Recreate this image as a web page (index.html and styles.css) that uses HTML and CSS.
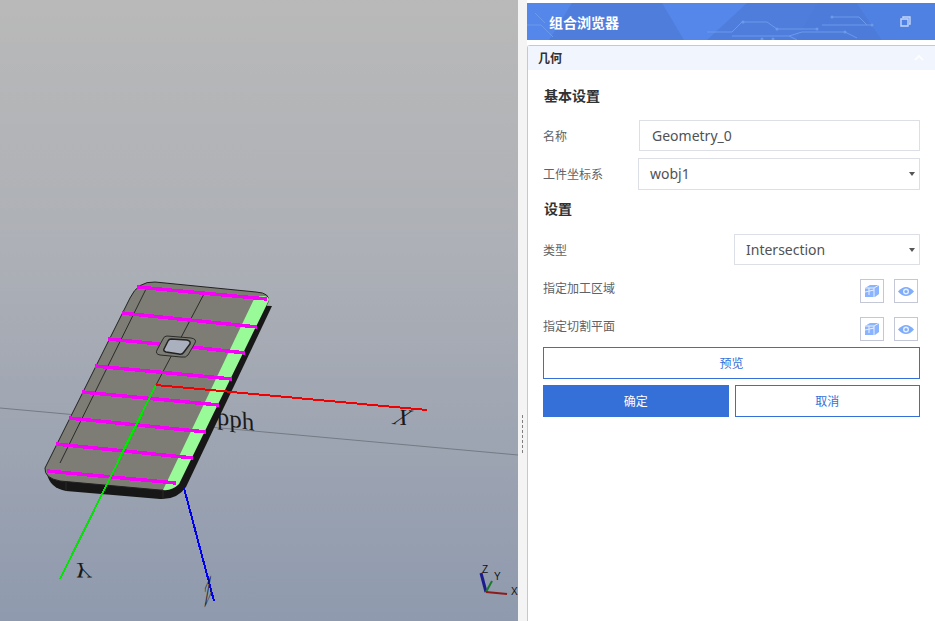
FILE: index.html
```html
<!DOCTYPE html>
<html lang="zh-CN">
<head>
    <meta charset="UTF-8">
    <title>组合浏览器</title>
    <link rel="stylesheet" href="styles.css">
</head>
<body>
    <div class="viewport">
        <svg class="scene" width="518" height="621" viewBox="0 0 518 621">
            <line x1="0" y1="408" x2="518" y2="455" stroke="#757b85" stroke-width="1"/>
            <text class="label3d" transform="translate(217 424) rotate(10) skewX(12) scale(1.150 1.100)">pph</text>
            <!-- phone body -->
            <path d="M272 306 L186 487 Q177 500 160 499 L66 491 Q50 488 47 474 L130 300 Z" fill="#171717"/>
            <path d="M130 298 Q138 281 155 282 L256 292 Q271 293 268 302 L179 484 Q172 491 160 490 L60 481 Q44 478 45 468 Z" fill="#7d7d76" stroke="#222" stroke-width="1"/>
            <path d="M255 297 L264 296 Q271 297 268 302 L179 484 Q172 491 163 490 Z" fill="#98fb98"/>
            <path d="M147 287 L60 463 M205 292 L156 385 M163 490 L163 499 M66 482 L66 491" stroke="#2b2b28" stroke-width="1" fill="none"/>
            <!-- strips -->
            <g class="hard" stroke="#f700f7" stroke-width="3.500">
                <line x1="137" y1="287" x2="267" y2="299"/>
                <line x1="122" y1="313" x2="257" y2="327"/>
                <line x1="108" y1="339" x2="160" y2="344"/>
                <line x1="192" y1="347" x2="245" y2="353"/>
                <line x1="95" y1="366" x2="232" y2="379"/>
                <line x1="82" y1="392" x2="219" y2="405"/>
                <line x1="69" y1="418" x2="206" y2="432"/>
                <line x1="56" y1="444" x2="193" y2="458"/>
                <line x1="47" y1="471" x2="176" y2="483"/>
            </g>
            <!-- camera hole -->
            <path d="M167 336 L191 338 Q197 339 195 343 L188 355 Q186 358 181 357 L160 355 Q155 354 157 350 L163 339 Q164 336 167 336 Z" fill="#7d7d76" stroke="#2b2b28"/>
            <path d="M171 339 L187 340 Q191 341 190 344 L184 352 Q182 355 179 354 L166 352 Q163 351 164 349 L168 341 Q169 339 171 339 Z" fill="#aab0bd" stroke="#222" stroke-width="1.500"/>
            <!-- axes -->
            <g class="hard" stroke-width="2">
                <line x1="156" y1="385" x2="60" y2="579" stroke="#00e600"/>
                <line x1="156" y1="385" x2="427" y2="410" stroke="#f00000"/>
                <line x1="184" y1="488" x2="214" y2="601" stroke="#0000f0"/>
            </g>
            <text class="label3d" transform="translate(391 424) skewX(-28) rotate(4)">X</text>
            <text class="label3d" transform="translate(72 563) scale(1 -1) skewX(-18)">Y</text>
            <text class="label3d" transform="translate(204 609) scale(.6 1.300) skewY(-45)">Z</text>
            <!-- corner triad -->
            <g stroke-width="2" fill="none">
                <path d="M486 592 L481 573" stroke="#1c1c8c" stroke-width="3"/>
                <path d="M486 592 L492 581" stroke="#1c7a2c"/>
                <path d="M486 592 L507 594" stroke="#8c1c1c"/>
            </g>
            <text class="triad" x="482" y="573">Z</text>
            <text class="triad" x="494" y="580">Y</text>
            <text class="triad" x="511" y="595">X</text>
        </svg>
    </div>
    <div class="splitter"><span class="grip"></span></div>
    <div class="panel">
        <div class="browser-head">
            <svg class="circuit" width="408" height="37" viewBox="0 0 408 37">
                <path d="M45 0 H135 L157 37 H22 Z" fill="#4f7ddc"/>
                <path d="M220 0 H290 L268 37 H180 Z" fill="#4f7ddc"/>
                <path d="M290 0 H330 L355 37 H268 Z" fill="#4d7bd9"/>
                <path d="M355 37 L330 0 H408 V37 Z" fill="#4f81e2"/>
                <g stroke="#6d99ea" fill="none">
                    <path d="M180 29 H205 L215 19 H240 L250 26 H290"/>
                    <path d="M205 33 H262 L270 37 M262 33 L275 29 H318 L330 35"/>
                    <path d="M295 22 H345 M305 14 H332 L340 22"/>
                    <path d="M0 22 H14 L26 34 M8 10 L18 20"/>
                </g>
                <g fill="#6d99ea">
                    <circle cx="216" cy="19" r="1.500"/>
                    <circle cx="250" cy="26" r="1.500"/>
                    <circle cx="290" cy="26" r="1.500"/>
                    <circle cx="318" cy="29" r="1.500"/>
                    <circle cx="345" cy="22" r="1.500"/>
                    <circle cx="305" cy="14" r="1.500"/>
                    <circle cx="235" cy="36" r="1.500"/>
                    <circle cx="246" cy="36" r="1.500"/>
                </g>
            </svg>
            <span class="browser-title">组合浏览器</span>
            <svg class="restore" width="11" height="11" viewBox="0 0 11 11">
                <path d="M3 2 V1 H10 V8 H9 M1 3 H8 V10 H1 Z" fill="none" stroke="#c5d6f7" stroke-width="1.400"/>
            </svg>
        </div>
        <div class="section">
            <div class="section-head">
                <span>几何</span>
                <svg width="10" height="6" viewBox="0 0 10 6"><path d="M1 5 L5 1 L9 5" fill="none" stroke="#fff" stroke-width="1.600"/></svg>
            </div>
            <div class="form">
                <div class="group-title">基本设置</div>
                <div class="row row-name">
                    <label>名称</label>
                    <div class="field text-field">Geometry_0</div>
                </div>
                <div class="row row-frame">
                    <label>工件坐标系</label>
                    <div class="field select-field">wobj1<span class="caret"></span></div>
                </div>
                <div class="group-title group-second">设置</div>
                <div class="row row-type">
                    <label>类型</label>
                    <div class="field select-field">Intersection<span class="caret"></span></div>
                </div>
                <div class="row row-pick row-pick-first">
                    <label>指定加工区域</label>
                    <div class="pick-buttons">
                        <span class="pick-btn"><svg width="16" height="14" viewBox="0 0 16 14"><path d="M1 4 L6 1 H15 V10 L11 13 H1 Z" fill="#8ab4ff"/><path d="M1 4 H10 V13 M10 4 L15 1 M5 4 V11 M1 8 L10 6" fill="none" stroke="#e8f0ff" stroke-width="1"/></svg></span>
                        <span class="pick-btn"><svg width="16" height="11" viewBox="0 0 16 11"><path d="M0 5.5 Q8 -3.5 16 5.5 Q8 14.500 0 5.500 Z" fill="#7fadfb"/><circle cx="8" cy="5.500" r="3" fill="#e8f0ff"/><circle cx="8" cy="5.500" r="1.600" fill="#7fadfb"/></svg></span>
                    </div>
                </div>
                <div class="row row-pick">
                    <label>指定切割平面</label>
                    <div class="pick-buttons">
                        <span class="pick-btn"><svg width="16" height="14" viewBox="0 0 16 14"><path d="M1 4 L6 1 H15 V10 L11 13 H1 Z" fill="#8ab4ff"/><path d="M1 4 H10 V13 M10 4 L15 1 M5 4 V11 M1 8 L10 6" fill="none" stroke="#e8f0ff" stroke-width="1"/></svg></span>
                        <span class="pick-btn"><svg width="16" height="11" viewBox="0 0 16 11"><path d="M0 5.5 Q8 -3.5 16 5.5 Q8 14.500 0 5.500 Z" fill="#7fadfb"/><circle cx="8" cy="5.500" r="3" fill="#e8f0ff"/><circle cx="8" cy="5.500" r="1.600" fill="#7fadfb"/></svg></span>
                    </div>
                </div>
                <button class="btn btn-preview">预览</button>
                <div class="btn-row">
                    <button class="btn btn-primary">确定</button>
                    <button class="btn">取消</button>
                </div>
            </div>
        </div>
    </div>
</body>
</html>
```

FILE: styles.css
```css
* {
    box-sizing: border-box;
}
body {
    margin: 0;
    width: 935px;
    height: 621px;
    overflow: hidden;
    display: flex;
    background: white;
    font-family: "Noto Sans", "Noto Sans CJK SC", sans-serif;
    color: #606266;
}
.viewport {
    width: 518px;
    height: 621px;
    background: linear-gradient(180deg, #b9b9b9 0%, #adb0b6 40%, #8f9aae 100%);
}
.scene {
    display: block;
}
.hard {
    shape-rendering: crispEdges;
}
.label3d {
    font-family: "Liberation Serif", serif;
    font-size: 22px;
    fill: #1a1a1a;
}
.triad {
    font-family: "Liberation Sans", sans-serif;
    font-size: 10px;
    fill: #111;
}
.splitter {
    width: 9px;
    background: #f4f4f4;
    position: relative;
}
.grip {
    position: absolute;
    left: 4px;
    top: 415px;
    height: 38px;
    border-left: 1px dashed #808080;
}
.panel {
    flex: 1;
    padding-top: 3px;
    display: flex;
    flex-direction: column;
}
.browser-head {
    position: relative;
    height: 37px;
    background: #5587ea;
    display: flex;
    align-items: center;
    justify-content: space-between;
    padding: 0 24px 0 22px;
    overflow: hidden;
}
.circuit {
    position: absolute;
    left: 0;
    top: 0;
}
.browser-title {
    position: relative;
    color: white;
    font-size: 14px;
    font-weight: bold;
}
.restore {
    position: relative;
}
.section {
    flex: 1;
    margin-top: 5px;
    border-top: 1px solid #c8c8c8;
    border-left: 1px solid #c8c8c8;
    border-top-left-radius: 3px;
}
.section-head {
    height: 24px;
    background: #f1f5fd;
    display: flex;
    align-items: center;
    justify-content: space-between;
    padding: 0 11px 0 10px;
    font-size: 12px;
    font-weight: bold;
    color: #303133;
}
.form {
    padding: 15px 15px 0;
}
.group-title {
    font-size: 14px;
    font-weight: bold;
    color: #303133;
    height: 20px;
    line-height: 21px;
    margin-bottom: 15px;
    padding-left: 1px;
}
.group-second {
    margin-top: 8px;
    margin-bottom: 16px;
}
.row {
    display: flex;
    align-items: center;
    justify-content: space-between;
    font-size: 12px;
}
.row-name {
    height: 31px;
    margin-bottom: 7px;
}
.row-frame {
    height: 32px;
}
.row-type {
    height: 31px;
    margin-bottom: 14px;
}
.row-pick {
    height: 24px;
    padding-right: 2px;
    margin-bottom: 6px;
}
.row-pick-first {
    margin-bottom: 14px;
}
.row-pick label {
    position: relative;
    top: -3px;
}
.field {
    height: 100%;
    border: 1px solid #dcdfe6;
    font-size: 14px;
    line-height: 29px;
    color: #505255;
}
.text-field {
    width: 281px;
    padding-left: 12px;
}
.row-frame .field {
    width: 282px;
    padding-left: 11px;
}
.row-type .field {
    width: 186px;
    padding-left: 11px;
}
.select-field {
    position: relative;
}
.caret {
    position: absolute;
    right: 4px;
    top: 13px;
    border: 3px solid transparent;
    border-top: 4px solid #555;
    border-bottom: 0;
}
.pick-buttons {
    display: flex;
    gap: 10px;
}
.pick-btn {
    width: 24px;
    height: 24px;
    border: 1px solid #c4c8d6;
    display: flex;
    align-items: center;
    justify-content: center;
}
.btn {
    display: block;
    background: white;
    border: 1px solid #356fd8;
    color: #356fd8;
    font-family: inherit;
    font-size: 12px;
    height: 32px;
    padding: 0;
    flex: 1;
}
.btn-preview {
    width: 100%;
}
.btn-row {
    display: flex;
    gap: 6px;
    margin-top: 6px;
}
.btn-primary {
    background: #356fd8;
    color: white;
}
```
